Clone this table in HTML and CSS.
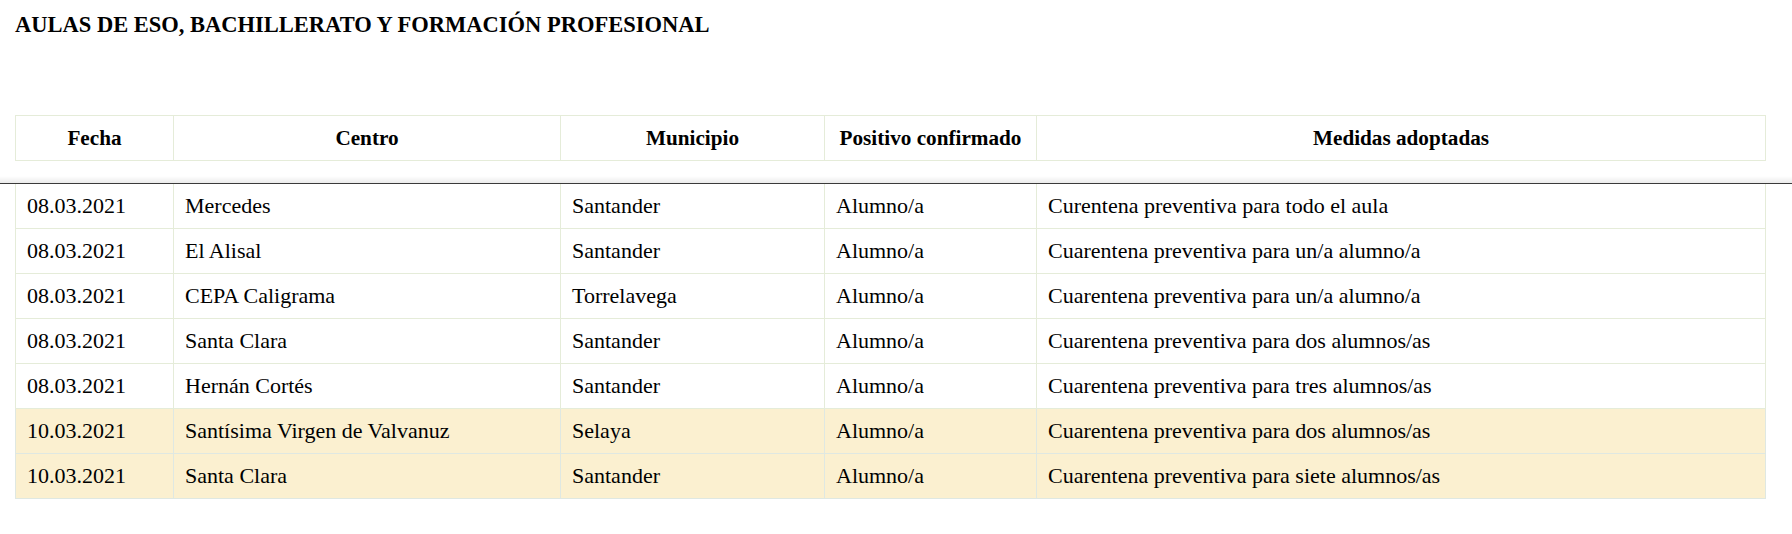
FILE: index.html
```html
<!DOCTYPE html>
<html lang="es">
<head>
<meta charset="utf-8">
<title>Aulas de ESO, Bachillerato y Formación Profesional</title>
<link rel="stylesheet" href="styles.css">
</head>
<body>
<div class="wrap">
  <h2 class="title">AULAS DE ESO, BACHILLERATO Y FORMACIÓN PROFESIONAL</h2>
  <table class="grid head">
    <colgroup><col class="c1"><col class="c2"><col class="c3"><col class="c4"><col class="c5"></colgroup>
    <thead>
      <tr><th>Fecha</th><th>Centro</th><th>Municipio</th><th>Positivo confirmado</th><th>Medidas adoptadas</th></tr>
    </thead>
  </table>
</div>
<div class="divider"></div>
<div class="wrap">
  <table class="grid body">
    <colgroup><col class="c1"><col class="c2"><col class="c3"><col class="c4"><col class="c5"></colgroup>
    <tbody>
      <tr><td>08.03.2021</td><td>Mercedes</td><td>Santander</td><td>Alumno/a</td><td>Curentena preventiva para todo el aula</td></tr>
      <tr><td>08.03.2021</td><td>El Alisal</td><td>Santander</td><td>Alumno/a</td><td>Cuarentena preventiva para un/a alumno/a</td></tr>
      <tr><td>08.03.2021</td><td>CEPA Caligrama</td><td>Torrelavega</td><td>Alumno/a</td><td>Cuarentena preventiva para un/a alumno/a</td></tr>
      <tr><td>08.03.2021</td><td>Santa Clara</td><td>Santander</td><td>Alumno/a</td><td>Cuarentena preventiva para dos alumnos/as</td></tr>
      <tr><td>08.03.2021</td><td>Hernán Cortés</td><td>Santander</td><td>Alumno/a</td><td>Cuarentena preventiva para tres alumnos/as</td></tr>
      <tr class="new"><td>10.03.2021</td><td>Santísima Virgen de Valvanuz</td><td>Selaya</td><td>Alumno/a</td><td>Cuarentena preventiva para dos alumnos/as</td></tr>
      <tr class="new"><td>10.03.2021</td><td>Santa Clara</td><td>Santander</td><td>Alumno/a</td><td>Cuarentena preventiva para siete alumnos/as</td></tr>
    </tbody>
  </table>
</div>
</body>
</html>
```

FILE: styles.css
```css
html, body {
  margin: 0;
  padding: 0;
  background: #ffffff;
  color: #000000;
  font-family: "Liberation Serif", "Times New Roman", serif;
}

.wrap {
  padding: 0 27px 0 15px;
}

.title {
  margin: 0;
  padding-top: 11px;
  font-size: 22.5px;
  font-weight: bold;
  line-height: 28px;
  height: 104px;
}

.grid {
  width: 1750px;
  border-collapse: collapse;
  table-layout: fixed;
}

.c1 { width: 158px; }
.c2 { width: 387px; }
.c3 { width: 264px; }
.c4 { width: 212px; }
.c5 { width: 729px; }

.grid th,
.grid td {
  border: 1px solid #e5ecd9;
  padding: 10px 11px;
  line-height: 24px;
  text-align: left;
  vertical-align: middle;
  white-space: nowrap;
}

.grid th {
  font-size: 21.2px;
  font-weight: bold;
  text-align: center;
}

.grid td {
  font-size: 22px;
}

.head {
  margin-bottom: 15px;
}

.divider {
  height: 7px;
  background: linear-gradient(to bottom, rgba(0,0,0,0) 0%, rgba(0,0,0,0.08) 100%);
  border-bottom: 1px solid #3a3a3a;
}

.body tr:first-child td {
  border-top: none;
}

.body tr.new td {
  background: #fbf0d0;
  border-color: #dfe8e2;
}
```
